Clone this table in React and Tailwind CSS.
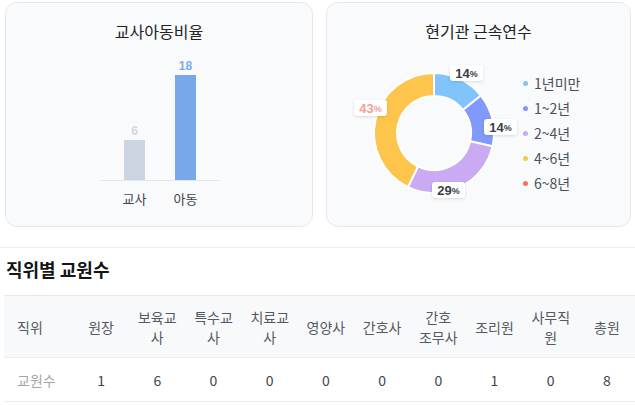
import React from "react";

const KR = { fontFamily: '"Noto Sans CJK KR", "Noto Sans", sans-serif' };

function arcPath(cx, cy, r0, r1, a0, a1) {
  const rad = (a) => ((a - 90) * Math.PI) / 180;
  const p = (r, a) => [cx + r * Math.cos(rad(a)), cy + r * Math.sin(rad(a))];
  const large = a1 - a0 > 180 ? 1 : 0;
  const [x0, y0] = p(r1, a0);
  const [x1, y1] = p(r1, a1);
  const [x2, y2] = p(r0, a1);
  const [x3, y3] = p(r0, a0);
  return `M${x0} ${y0} A${r1} ${r1} 0 ${large} 1 ${x1} ${y1} L${x2} ${y2} A${r0} ${r0} 0 ${large} 0 ${x3} ${y3} Z`;
}

const segments = [
  { v: 1, color: "#80c4fb" },
  { v: 1, color: "#8199fa" },
  { v: 2, color: "#c9aaf3" },
  { v: 3, color: "#fdc54b" },
];

const legend = [
  { label: "1년미만", color: "#80c4fb" },
  { label: "1~2년", color: "#8199fa" },
  { label: "2~4년", color: "#c9aaf3" },
  { label: "4~6년", color: "#fdc54b" },
  { label: "6~8년", color: "#f87060" },
];

function Donut() {
  const total = segments.reduce((s, x) => s + x.v, 0);
  let acc = 0;
  const paths = segments.map((s, i) => {
    const a0 = (acc / total) * 360;
    acc += s.v;
    const a1 = (acc / total) * 360;
    return (
      <path key={i} d={arcPath(90, 75, 37, 60, a0, a1)} fill={s.color} stroke="#ffffff" strokeWidth="2" />
    );
  });
  const labels = [
    { t: "14", l: "left-[106px] top-[7px]", c: "text-[#3a3f47]" },
    { t: "14", l: "left-[140px] top-[61px]", c: "text-[#3a3f47]" },
    { t: "29", l: "left-[88px] top-[124px]", c: "text-[#3a3f47]" },
    { t: "43", l: "left-[10px] top-[42px]", c: "text-[#f6a095]" },
  ];
  return (
    <div className="relative w-[178px] h-[150px] shrink-0">
      <svg width="178" height="150" viewBox="0 0 178 150">
        {paths}
      </svg>
      {labels.map((lb, i) => (
        <div
          key={i}
          className={`absolute ${lb.l} w-[33px] h-[16px] bg-white rounded-[3px] shadow-[0_1px_3px_rgba(0,0,0,0.13)] flex items-center justify-center ${lb.c}`}
          style={{ fontFamily: '"Liberation Sans", Arial, sans-serif' }}
        >
          <span className="text-[13px] font-bold leading-none">{lb.t}</span>
          <span className="text-[9px] font-bold leading-none mt-[2px]">%</span>
        </div>
      ))}
    </div>
  );
}

function BarChart() {
  return (
    <svg width="306" height="182" viewBox="0 0 306 182">
      <line x1="94" y1="137.5" x2="214" y2="137.5" stroke="#e3e6eb" strokeWidth="1" />
      <rect x="118" y="97" width="21" height="40" fill="#cdd4e2" />
      <rect x="169" y="32" width="21" height="105" fill="#78a8e9" />
      <text x="128.5" y="91.5" textAnchor="middle" fontSize="12" fontWeight="700" fill="#cfd6e2" fontFamily="Liberation Sans, Arial, sans-serif">6</text>
      <text x="179.5" y="26.5" textAnchor="middle" fontSize="12" fontWeight="700" fill="#7daaeb" fontFamily="Liberation Sans, Arial, sans-serif">18</text>
      <text x="128.5" y="161" textAnchor="middle" fontSize="13" fill="#3f444c" fontFamily='"Noto Sans CJK KR", sans-serif'>교사</text>
      <text x="179.5" y="161" textAnchor="middle" fontSize="13" fill="#3f444c" fontFamily='"Noto Sans CJK KR", sans-serif'>아동</text>
    </svg>
  );
}

const headers = [
  ["직위"],
  ["원장"],
  ["보육교", "사"],
  ["특수교", "사"],
  ["치료교", "사"],
  ["영양사"],
  ["간호사"],
  ["간호", "조무사"],
  ["조리원"],
  ["사무직", "원"],
  ["총원"],
];
const values = ["1", "6", "0", "0", "0", "0", "0", "1", "0", "8"];

export default function App() {
  return (
    <div className="w-[635px] h-[405px] bg-white overflow-hidden" style={KR}>
      <div className="flex gap-[13px] pl-[5px] pt-[2px]">
        <div className="w-[308px] h-[225px] rounded-[12px] border border-[#e6e8ec] bg-[#f9fafc]">
          <div className="pt-[16px] h-[40px] text-center text-[16px] leading-[24px] text-[#222]">교사아동비율</div>
          <BarChart />
        </div>
        <div className="w-[305px] h-[225px] rounded-[12px] border border-[#e6e8ec] bg-[#f9fafc]">
          <div className="pt-[16px] h-[40px] text-center text-[16px] leading-[24px] text-[#222]">현기관 근속연수</div>
          <div className="flex items-center pl-[17px] mt-[15px]">
            <Donut />
            <div className="flex flex-col pl-[1px]">
              {legend.map((l) => (
                <div key={l.label} className="flex items-center h-[25px] gap-[6px]">
                  <span className="w-[5px] h-[5px] rounded-full" style={{ backgroundColor: l.color }} />
                  <span className="text-[14px] leading-[25px] text-[#4b5058]">{l.label}</span>
                </div>
              ))}
            </div>
          </div>
        </div>
      </div>

      <div className="mt-[20px] border-t border-[#eeeff2]">
        <div className="pl-[6px] pt-[9px] h-[47px] text-[18px] leading-[24px] font-bold text-[#151515]">직위별 교원수</div>
        <div className="ml-[4px] w-[631px]">
          <div className="grid grid-cols-[69px_repeat(10,1fr)] h-[62px] bg-[#f8f9fb] border-t border-[#e7e9ed] items-center">
            {headers.map((h, i) => (
              <div
                key={i}
                className={`text-[14px] leading-[20px] text-[#555a62] ${i === 0 ? "pl-[13px] text-left" : "text-center"}`}
              >
                {h.map((line, j) => (
                  <div key={j}>{line}</div>
                ))}
              </div>
            ))}
          </div>
          <div className="grid grid-cols-[69px_repeat(10,1fr)] h-[45px] border-t border-b border-[#eceef1] items-center">
            <div className="pl-[13px] text-[14px] leading-[20px] text-[#a3a7ad]">교원수</div>
            {values.map((v, i) => (
              <div key={i} className="text-center text-[14px] leading-[20px] text-[#3f444c]">
                {v}
              </div>
            ))}
          </div>
        </div>
      </div>
    </div>
  );
}
